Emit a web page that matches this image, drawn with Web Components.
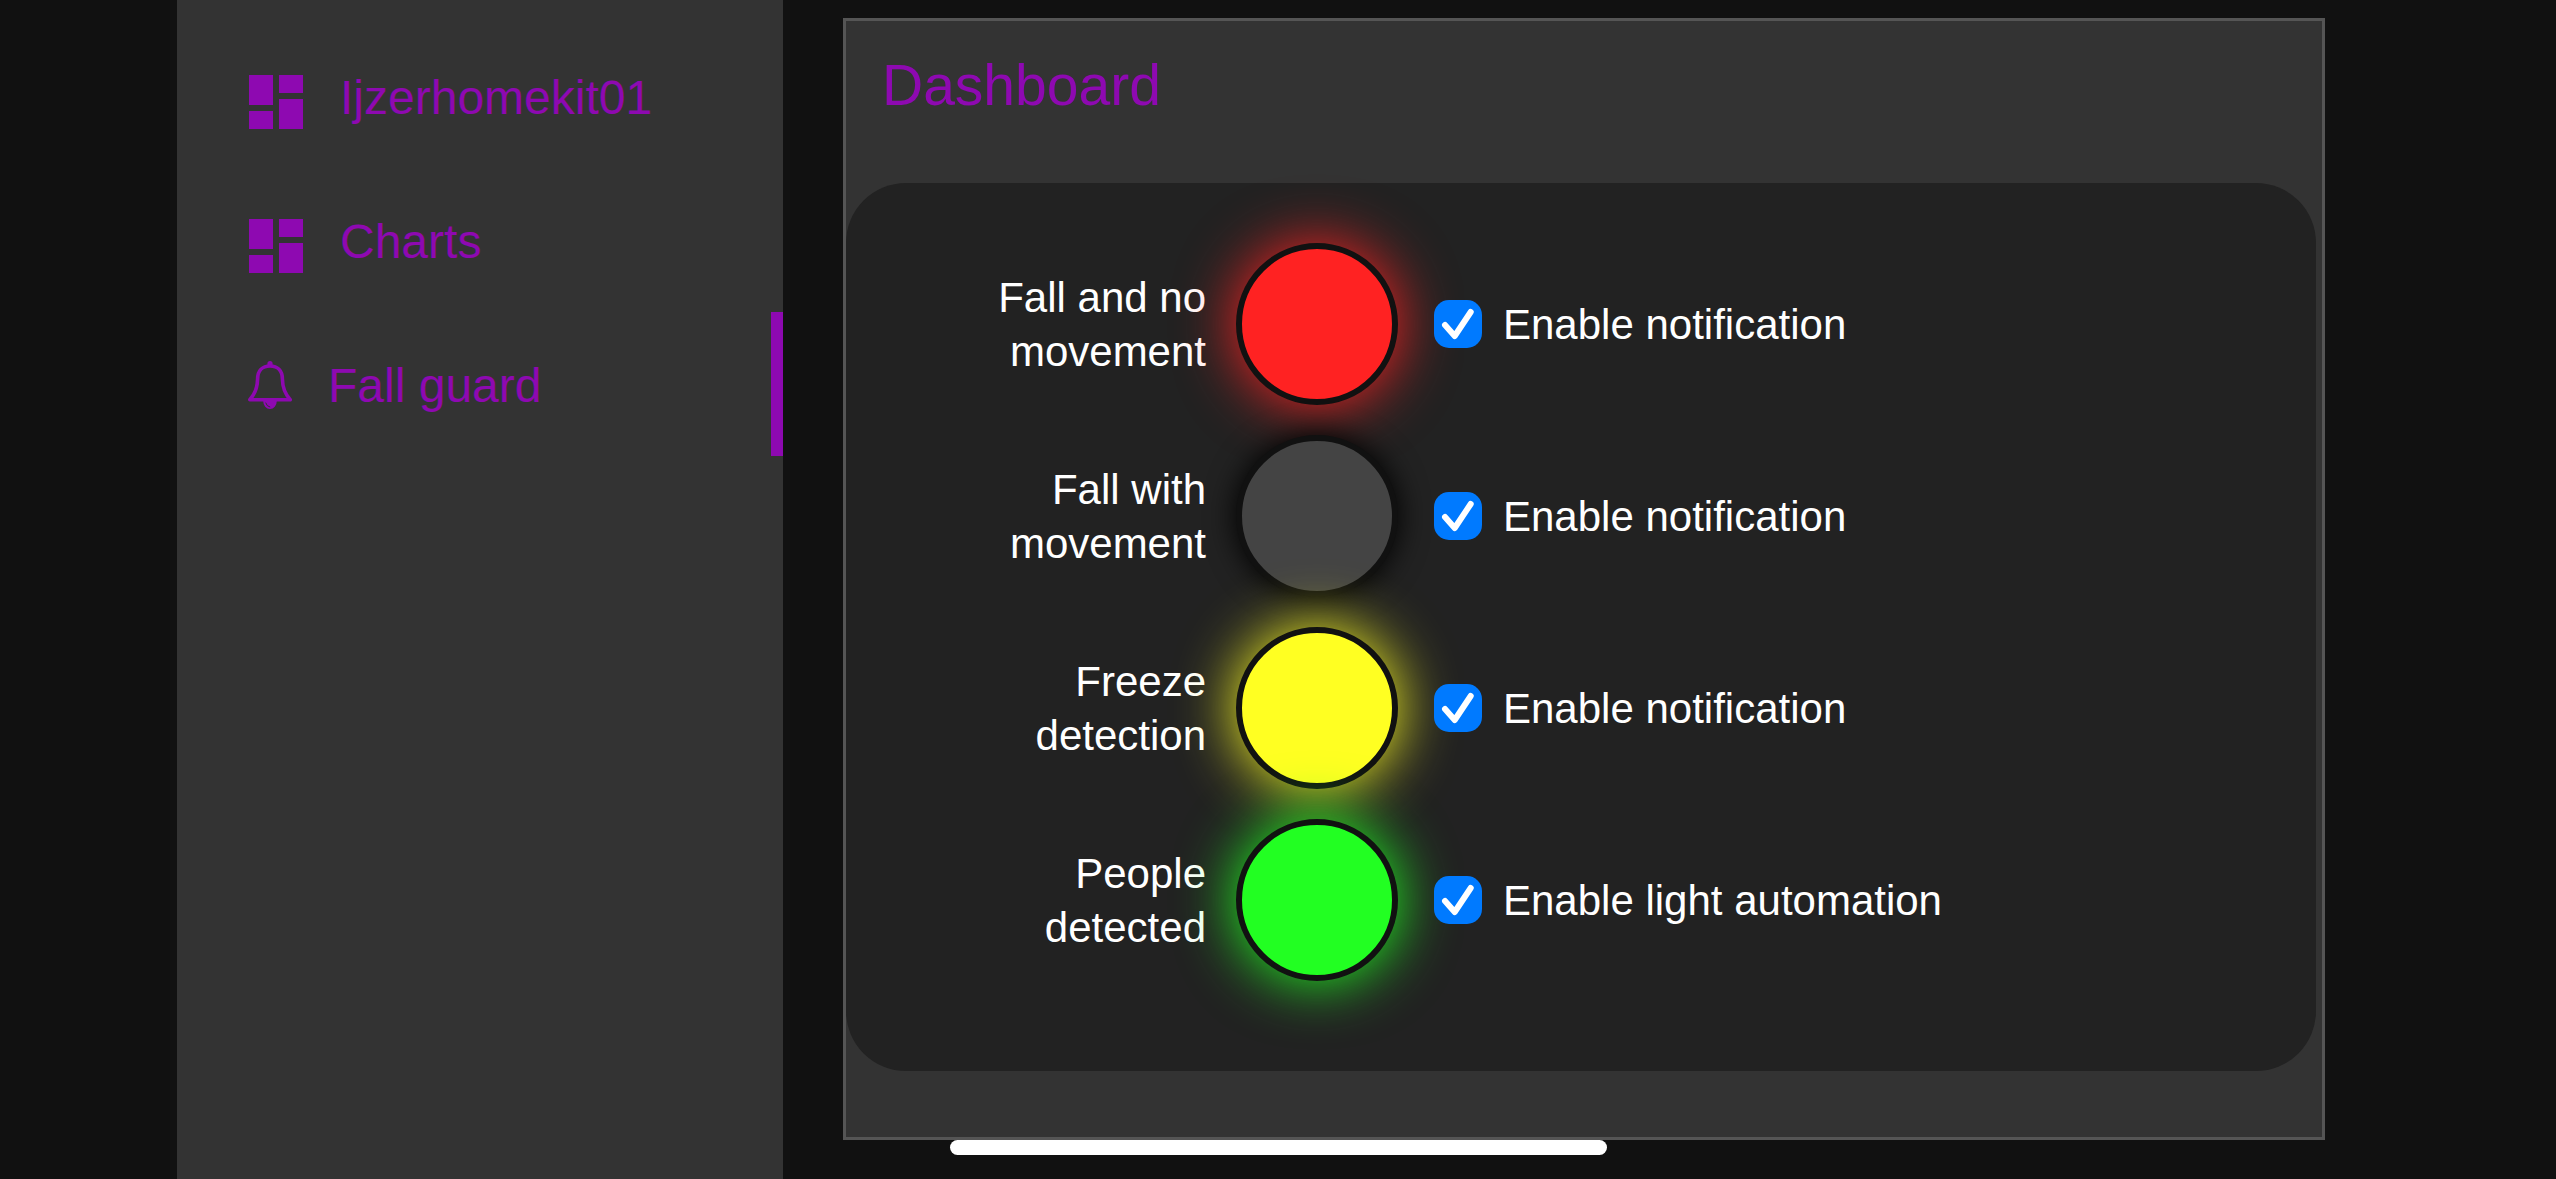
<!DOCTYPE html>
<html lang="en">
<head>
<meta charset="utf-8">
<meta name="viewport" content="width=device-width, initial-scale=1">
<title>Dashboard</title>
<style>
  html { background: #111; }
  body {
    margin: 0;
    color: #fff;
    font-family: "Liberation Sans", Arial, sans-serif;
    --accent: #8e09b1;
    --surface: #333;
    --card: #222;
    --edge: #111;
  }
</style>
</head>
<body>
<app-shell>
  <side-nav slot="nav">
    <nav-item icon="dashboard">Ijzerhomekit01</nav-item>
    <nav-item icon="dashboard">Charts</nav-item>
    <nav-item icon="bell" active>Fall guard</nav-item>
  </side-nav>
  <dash-panel>
    <span slot="title">Dashboard</span>
    <status-row color="#f22" option="Enable notification">Fall and no movement</status-row>
    <status-row option="Enable notification">Fall with movement</status-row>
    <status-row color="#ff2" option="Enable notification">Freeze detection</status-row>
    <status-row color="#2f2" option="Enable light automation">People detected</status-row>
  </dash-panel>
</app-shell>
<home-indicator></home-indicator>

<script>
  const icons = {
    dashboard: `<svg class="dashboard" viewBox="0 0 24 24" aria-hidden="true">
      <path fill="currentColor" d="M3 13h8V3H3v10zm0 8h8v-6H3v6zm10 0h8V11h-8v10zm0-18v6h8V3h-8z"/></svg>`,
    bell: `<svg class="bell" viewBox="0 0 60 60" aria-hidden="true">
      <path fill="none" stroke="currentColor" stroke-width="3.600" stroke-linejoin="round"
        d="M9.800 43.800C14.500 38.500 17.500 31 17.600 23C17.700 14.500 22.500 10 30 10C37.500 10 42.300 14.500 42.400 23C42.500 31 45.500 38.500 50.200 43.800Z"/>
      <path fill="currentColor" d="M27.400 10V7.600a2.600 2.600 0 0 1 5.200 0V10z"/>
      <path fill="currentColor" d="M23.200 45h13.600a6.800 8 0 0 1-13.600 0z"/>
      <path fill="none" stroke="#333" stroke-width="1" stroke-linecap="round" d="M25.800 47q.8 3.400 4 4"/></svg>`
  };

  class Base extends HTMLElement {
    connectedCallback() {
      if (this.shadowRoot) return;
      this.attachShadow({ mode: "open" }).innerHTML = this.render();
    }
  }

  customElements.define("app-shell", class extends Base {
    render() {
      return `<style>
        :host { display: flex; box-sizing: border-box; min-height: 100vh; padding: 0 177px; background: #111; }
        ::slotted(side-nav) { flex: 0 0 606px; }
        main { flex: 1; min-width: 0; padding: 18px 54px 0 60px; }
      </style>
      <slot name="nav"></slot><main><slot></slot></main>`;
    }
  });

  customElements.define("side-nav", class extends Base {
    render() {
      return `<style>
        :host { display: block; background: var(--surface); }
        nav { display: flex; flex-direction: column; padding-top: 24px; }
      </style><nav><slot></slot></nav>`;
    }
  });

  customElements.define("nav-item", class extends Base {
    render() {
      return `<style>
        :host { display: block; }
        a {
          display: flex; align-items: center; gap: 28px; box-sizing: border-box;
          height: 144px; padding: 4px 0 0 63px;
          border-right: 12px solid transparent;
          color: var(--accent); font-size: 48px; line-height: 54px;
          text-decoration: none; white-space: nowrap;
        }
        :host([active]) a { border-color: var(--accent); }
        svg { display: block; flex: none; }
        .dashboard { width: 72px; height: 72px; margin-top: 8px; }
        .bell { width: 60px; height: 60px; }
      </style><a href="#">${icons[this.getAttribute("icon")]}<span><slot></slot></span></a>`;
    }
  });

  customElements.define("dash-panel", class extends Base {
    render() {
      return `<style>
        :host { display: block; border: 3px solid #555; background: var(--surface); padding: 0 6px 66px 0; }
        h1 { margin: 0; padding: 31px 36px 65px; color: var(--accent); font-size: 57px; line-height: 66px; font-weight: 400; }
        section { display: flex; flex-direction: column; padding: 45px 0 75px; border-radius: 60px; background: var(--card); }
      </style>
      <h1><slot name="title"></slot></h1><section><slot></slot></section>`;
    }
  });

  customElements.define("status-row", class extends Base {
    render() {
      const color = this.getAttribute("color");
      const lamp = color
        ? `background:${color};box-shadow:0 0 60px ${color}`
        : "background:#444;box-shadow:0 0 30px #000";
      return `<style>
        :host { display: flex; align-items: center; padding: 15px 0 15px 120px; font-size: 42px; line-height: 54px; }
        .name, label { padding-top: 2px; }
        .name { flex: 0 0 240px; text-align: right; }
        .lamp { flex: none; box-sizing: border-box; width: 162px; height: 162px; margin: 0 36px 0 30px; border: 6px solid var(--edge); border-radius: 50%; }
        .option { display: flex; align-items: center; gap: 21px; }
        .box { display: grid; width: 48px; height: 48px; }
        .box > * { grid-area: 1 / 1; }
        input { appearance: none; width: 48px; height: 48px; margin: 0; border-radius: 15px; background: #444; }
        input:checked { background: #007aff; }
        svg { width: 48px; height: 48px; pointer-events: none; visibility: hidden; }
        input:checked + svg { visibility: visible; }
      </style>
      <div class="name"><slot></slot></div>
      <div class="lamp" style="${lamp}"></div>
      <div class="option">
        <span class="box">
          <input type="checkbox" id="option" checked>
          <svg viewBox="0 0 48 48" aria-hidden="true"><path d="M11 25L20.700 36L36.700 12" fill="none" stroke="#fff" stroke-width="6" stroke-linecap="round" stroke-linejoin="round"/></svg>
        </span>
        <label for="option">${this.getAttribute("option")}</label>
      </div>`;
    }
  });

  customElements.define("home-indicator", class extends Base {
    render() {
      return `<style>
        :host { position: fixed; left: 0; right: 0; bottom: 24px; display: flex; justify-content: center; pointer-events: none; }
        div { width: 657px; height: 15px; border-radius: 8px; background: #fff; }
      </style><div></div>`;
    }
  });
</script>
</body>
</html>
